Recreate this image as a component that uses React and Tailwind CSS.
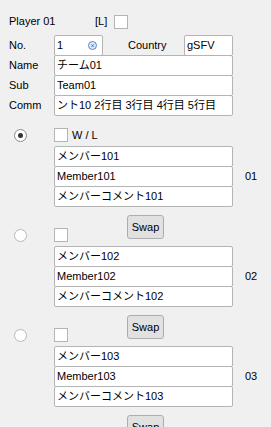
import React from "react";

const font = { fontFamily: '"Liberation Sans", "Noto Sans CJK JP", sans-serif' };

function Box({ children, className = "" }) {
  return (
    <div
      className={`h-[21px] bg-white border border-[#b4b4b4] rounded-[2px] px-[2px] flex items-center whitespace-nowrap overflow-hidden text-[11px] text-black ${className}`}
    >
      {children}
    </div>
  );
}

function Check() {
  return <div className="w-[14px] h-[14px] bg-white border border-[#b4b4b4]" />;
}

function Radio({ checked }) {
  return (
    <div
      className={`w-[13px] h-[13px] rounded-full bg-white border flex items-center justify-center ${
        checked ? "border-[#8a8a8a]" : "border-[#b8b8b8]"
      }`}
    >
      {checked && <div className="w-[5px] h-[5px] rounded-full bg-[#333]" />}
    </div>
  );
}

function SwapButton() {
  return (
    <div className="flex pl-[127px] mt-[8px] h-[24px]">
      <button className="w-[37px] h-[24px] bg-[#e1e1e1] border border-[#adadad] rounded-[3px] text-[11px] text-black flex items-center justify-center">
        Swap
      </button>
    </div>
  );
}

const members = [
  { id: "01", kana: "メンバー101", name: "Member101", comment: "メンバーコメント101", checked: true },
  { id: "02", kana: "メンバー102", name: "Member102", comment: "メンバーコメント102" },
  { id: "03", kana: "メンバー103", name: "Member103", comment: "メンバーコメント103" },
];

export default function App() {
  return (
    <div className="w-[271px] h-[427px] bg-[#f0f0f0] overflow-hidden text-[11px] text-black" style={font}>
      {/* Player header */}
      <div className="flex items-center pt-[14px] pl-[9px] h-[29px]">
        <span className="w-[86px]">Player 01</span>
        <span className="w-[19px]">[L]</span>
        <Check />
      </div>

      {/* Player fields */}
      <div className="mt-[6px] flex flex-col">
        <div className="flex items-center">
          <span className="w-[54px] pl-[9px]">No.</span>
          <Box className="w-[49px] border-[#6aa0e0] justify-between pr-[5px]">
            <span>1</span>
            <span className="w-[9px] h-[9px] rounded-full border border-[#5a7fd0] bg-[#e4ecfb] flex items-center justify-center text-[7px] leading-none text-[#3c64c0]">
              ×
            </span>
          </Box>
          <span className="w-[81px] pl-[25px]">Country</span>
          <Box className="w-[49px]">gSFV</Box>
        </div>
        <div className="flex items-center -mt-px">
          <span className="w-[54px] pl-[9px]">Name</span>
          <Box className="w-[179px]">チーム01</Box>
        </div>
        <div className="flex items-center -mt-px">
          <span className="w-[54px] pl-[9px]">Sub</span>
          <Box className="w-[179px]">Team01</Box>
        </div>
        <div className="flex items-center -mt-px">
          <span className="w-[54px] pl-[9px] whitespace-nowrap">Comm</span>
          <Box className="w-[179px]">ント10 2行目 3行目 4行目 5行目</Box>
        </div>
      </div>

      {/* Members */}
      <div className="mt-[12px] flex flex-col">
        {members.map((m, i) => (
          <div key={m.id} className={i > 0 ? "-mt-[11px]" : ""}>
            <div className="flex items-center h-[14px]">
              <div className="w-[54px] pl-[14px]">
                <Radio checked={m.checked} />
              </div>
              <Check />
              {i === 0 && <span className="ml-[4px]">W / L</span>}
            </div>
            <div className="flex items-center mt-[4px]">
              <div className="w-[54px]" />
              <div className="flex flex-col w-[179px]">
                <Box>{m.kana}</Box>
                <Box className="-mt-px">{m.name}</Box>
                <Box className="-mt-px">{m.comment}</Box>
              </div>
              <span className="ml-[12px]">{m.id}</span>
            </div>
            <SwapButton />
          </div>
        ))}
      </div>
    </div>
  );
}
